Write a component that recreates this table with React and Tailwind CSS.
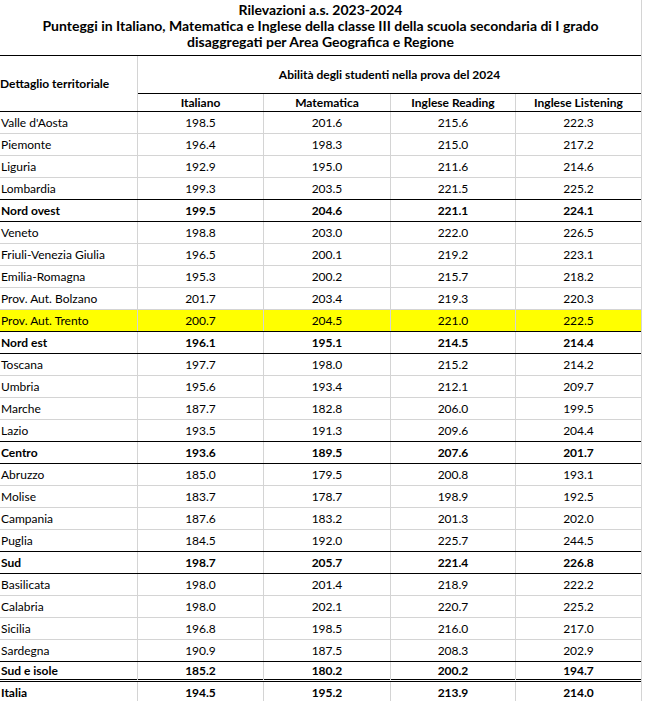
const rows = [
  ['Valle d\'Aosta', '198.5', '201.6', '215.6', '222.3'],
  ['Piemonte', '196.4', '198.3', '215.0', '217.2'],
  ['Liguria', '192.9', '195.0', '211.6', '214.6'],
  ['Lombardia', '199.3', '203.5', '221.5', '225.2'],
  ['Nord ovest', '199.5', '204.6', '221.1', '224.1', 'total'],
  ['Veneto', '198.8', '203.0', '222.0', '226.5'],
  ['Friuli-Venezia Giulia', '196.5', '200.1', '219.2', '223.1'],
  ['Emilia-Romagna', '195.3', '200.2', '215.7', '218.2'],
  ['Prov. Aut. Bolzano', '201.7', '203.4', '219.3', '220.3'],
  ['Prov. Aut. Trento', '200.7', '204.5', '221.0', '222.5', 'highlight'],
  ['Nord est', '196.1', '195.1', '214.5', '214.4', 'total'],
  ['Toscana', '197.7', '198.0', '215.2', '214.2'],
  ['Umbria', '195.6', '193.4', '212.1', '209.7'],
  ['Marche', '187.7', '182.8', '206.0', '199.5'],
  ['Lazio', '193.5', '191.3', '209.6', '204.4'],
  ['Centro', '193.6', '189.5', '207.6', '201.7', 'total'],
  ['Abruzzo', '185.0', '179.5', '200.8', '193.1'],
  ['Molise', '183.7', '178.7', '198.9', '192.5'],
  ['Campania', '187.6', '183.2', '201.3', '202.0'],
  ['Puglia', '184.5', '192.0', '225.7', '244.5'],
  ['Sud', '198.7', '205.7', '221.4', '226.8', 'total'],
  ['Basilicata', '198.0', '201.4', '218.9', '222.2'],
  ['Calabria', '198.0', '202.1', '220.7', '225.2'],
  ['Sicilia', '196.8', '198.5', '216.0', '217.0'],
  ['Sardegna', '190.9', '187.5', '208.3', '202.9'],
  ['Sud e isole', '185.2', '180.2', '200.2', '194.7', 'subtotal-last'],
  ['Italia', '194.5', '195.2', '213.9', '214.0', 'grand'],
];

const cols = 'grid grid-cols-[138px_126px_127px_125px_125px]';
const vline = 'border-r border-[#d4d4d4]';

function rowClass(r, next) {
  const kind = r[5];
  const nextKind = next ? next[5] : null;
  if (kind === 'subtotal-last') return 'h-[20px] border-b-[3px] border-double border-black';
  if (kind === 'grand') return 'h-[22px]';
  if (kind === 'total' || nextKind === 'total' || nextKind === 'subtotal-last') return 'h-[22px] border-b border-black';
  return 'h-[22px] border-b border-[#d4d4d4]';
}

export default function App() {
  return (
    <div className="min-h-[701px] w-[646px] bg-white text-black text-[12px] font-['Lato',sans-serif]">
      <div className="w-[642px] min-h-[705px] border-r border-[#d4d4d4]">
        <div className="flex h-[55px] flex-col items-center pt-[2px] text-[14px] font-bold leading-[16px]">
          <div>Rilevazioni a.s. 2023-2024</div>
          <div>Punteggi in Italiano, Matematica e Inglese della classe III della scuola secondaria di I grado</div>
          <div>disaggregati per Area Geografica e Regione</div>
        </div>

        <div className="grid grid-cols-[138px_503px] border-y border-black font-bold">
          <div className={`flex items-center ${vline}`}>Dettaglio territoriale</div>
          <div>
            <div className="flex h-[38px] items-center justify-center border-b border-black">
              Abilità degli studenti nella prova del 2024
            </div>
            <div className="grid h-[17px] grid-cols-[126px_127px_125px_125px] items-center text-center leading-none">
              <div className={`flex h-full items-center justify-center ${vline}`}>Italiano</div>
              <div className={`flex h-full items-center justify-center ${vline}`}>Matematica</div>
              <div className={`flex h-full items-center justify-center ${vline}`}>Inglese Reading</div>
              <div className="flex h-full items-center justify-center">Inglese Listening</div>
            </div>
          </div>
        </div>

        {rows.map((r, i) => {
          const bold = r[5] && r[5] !== 'highlight';
          return (
            <div
              key={r[0]}
              className={`${cols} ${rowClass(r, rows[i + 1])} ${r[5] === 'highlight' ? 'bg-[#ffff00]' : ''} ${bold ? 'font-bold' : ''}`}
            >
              <div className={`flex items-center pl-px ${vline}`}>{r[0]}</div>
              <div className={`flex items-center justify-center ${vline}`}>{r[1]}</div>
              <div className={`flex items-center justify-center ${vline}`}>{r[2]}</div>
              <div className={`flex items-center justify-center ${vline}`}>{r[3]}</div>
              <div className="flex items-center justify-center">{r[4]}</div>
            </div>
          );
        })}
      </div>
    </div>
  );
}
